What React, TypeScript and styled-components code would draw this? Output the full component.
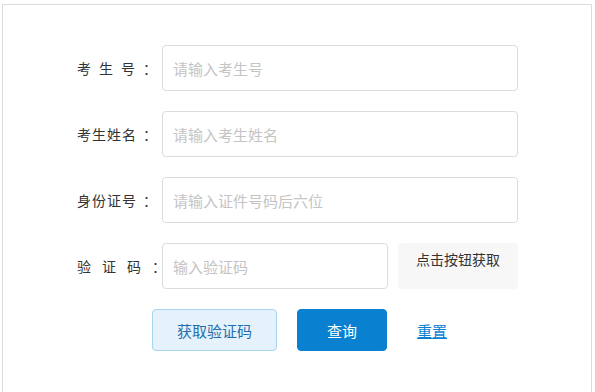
import React from "react";
import styled, { createGlobalStyle } from "styled-components";

const Global = createGlobalStyle`
  html, body { margin: 0; padding: 0; background: #fff; }
  body { font-family: "Noto Sans CJK SC", "Microsoft YaHei", sans-serif; }
  * { box-sizing: border-box; }
`;

const Frame = styled.div`
  margin: 4px 0 0 2px;
  width: 590px;
  height: 420px;
  border: 1px solid #dcdcdc;
  padding: 40px 0 0 74px;
`;

const Form = styled.form`
  display: flex;
  flex-direction: column;
  gap: 20px;
`;

const Row = styled.div`
  display: flex;
  align-items: center;
  height: 46px;
`;

const Label = styled.label<{ $spacing: number }>`
  width: 85px;
  flex: none;
  font-size: 14px;
  color: #333;
  letter-spacing: ${(p) => p.$spacing}px;
  white-space: nowrap;
`;

const Colon = styled.span<{ $gap: number }>`
  margin-left: ${(p) => p.$gap}px;
  letter-spacing: 0;
`;

const Input = styled.input<{ $w: number }>`
  width: ${(p) => p.$w}px;
  height: 46px;
  border: 1px solid #dcdcdc;
  border-radius: 4px;
  padding: 0 10px;
  font-family: inherit;
  font-size: 15px;
  color: #333;
  outline: none;
  &::placeholder { color: #c4c4c4; }
`;

const CodeButton = styled.button`
  margin-left: 10px;
  width: 120px;
  height: 46px;
  border: none;
  border-radius: 4px;
  background: #f7f7f7;
  color: #333;
  font-family: inherit;
  font-size: 14px;
  padding: 6px 0 0;
  display: flex;
  justify-content: center;
  align-items: flex-start;
`;

const Actions = styled.div`
  display: flex;
  align-items: center;
  margin-left: 75px;
  gap: 20px;
`;

const Btn = styled.button<{ $primary?: boolean; $w: number }>`
  width: ${(p) => p.$w}px;
  height: 42px;
  border-radius: 4px;
  font-family: inherit;
  font-size: 15px;
  border: 1px solid ${(p) => (p.$primary ? "#0a80d0" : "#a9d4f1")};
  background: ${(p) => (p.$primary ? "#0a80d0" : "#e6f2fb")};
  color: ${(p) => (p.$primary ? "#fff" : "#1f6fae")};
  padding: 0;
`;

const ResetLink = styled.a`
  margin-left: 10px;
  font-size: 15px;
  color: #0a7fd4;
  text-decoration: underline;
  cursor: pointer;
`;

export default function App() {
  return (
    <>
      <Global />
      <Frame>
        <Form onSubmit={(e) => e.preventDefault()}>
          <Row>
            <Label $spacing={8}>考生号<Colon $gap={0}>：</Colon></Label>
            <Input $w={356} placeholder="请输入考生号" />
          </Row>
          <Row>
            <Label $spacing={1}>考生姓名<Colon $gap={6}>：</Colon></Label>
            <Input $w={356} placeholder="请输入考生姓名" />
          </Row>
          <Row>
            <Label $spacing={1}>身份证号<Colon $gap={6}>：</Colon></Label>
            <Input $w={356} placeholder="请输入证件号码后六位" />
          </Row>
          <Row>
            <Label $spacing={11}>验证码<Colon $gap={0}>：</Colon></Label>
            <Input $w={226} placeholder="输入验证码" />
            <CodeButton type="button">点击按钮获取</CodeButton>
          </Row>
          <Actions>
            <Btn type="button" $w={125}>获取验证码</Btn>
            <Btn type="submit" $primary $w={90}>查询</Btn>
            <ResetLink>重置</ResetLink>
          </Actions>
        </Form>
      </Frame>
    </>
  );
}
